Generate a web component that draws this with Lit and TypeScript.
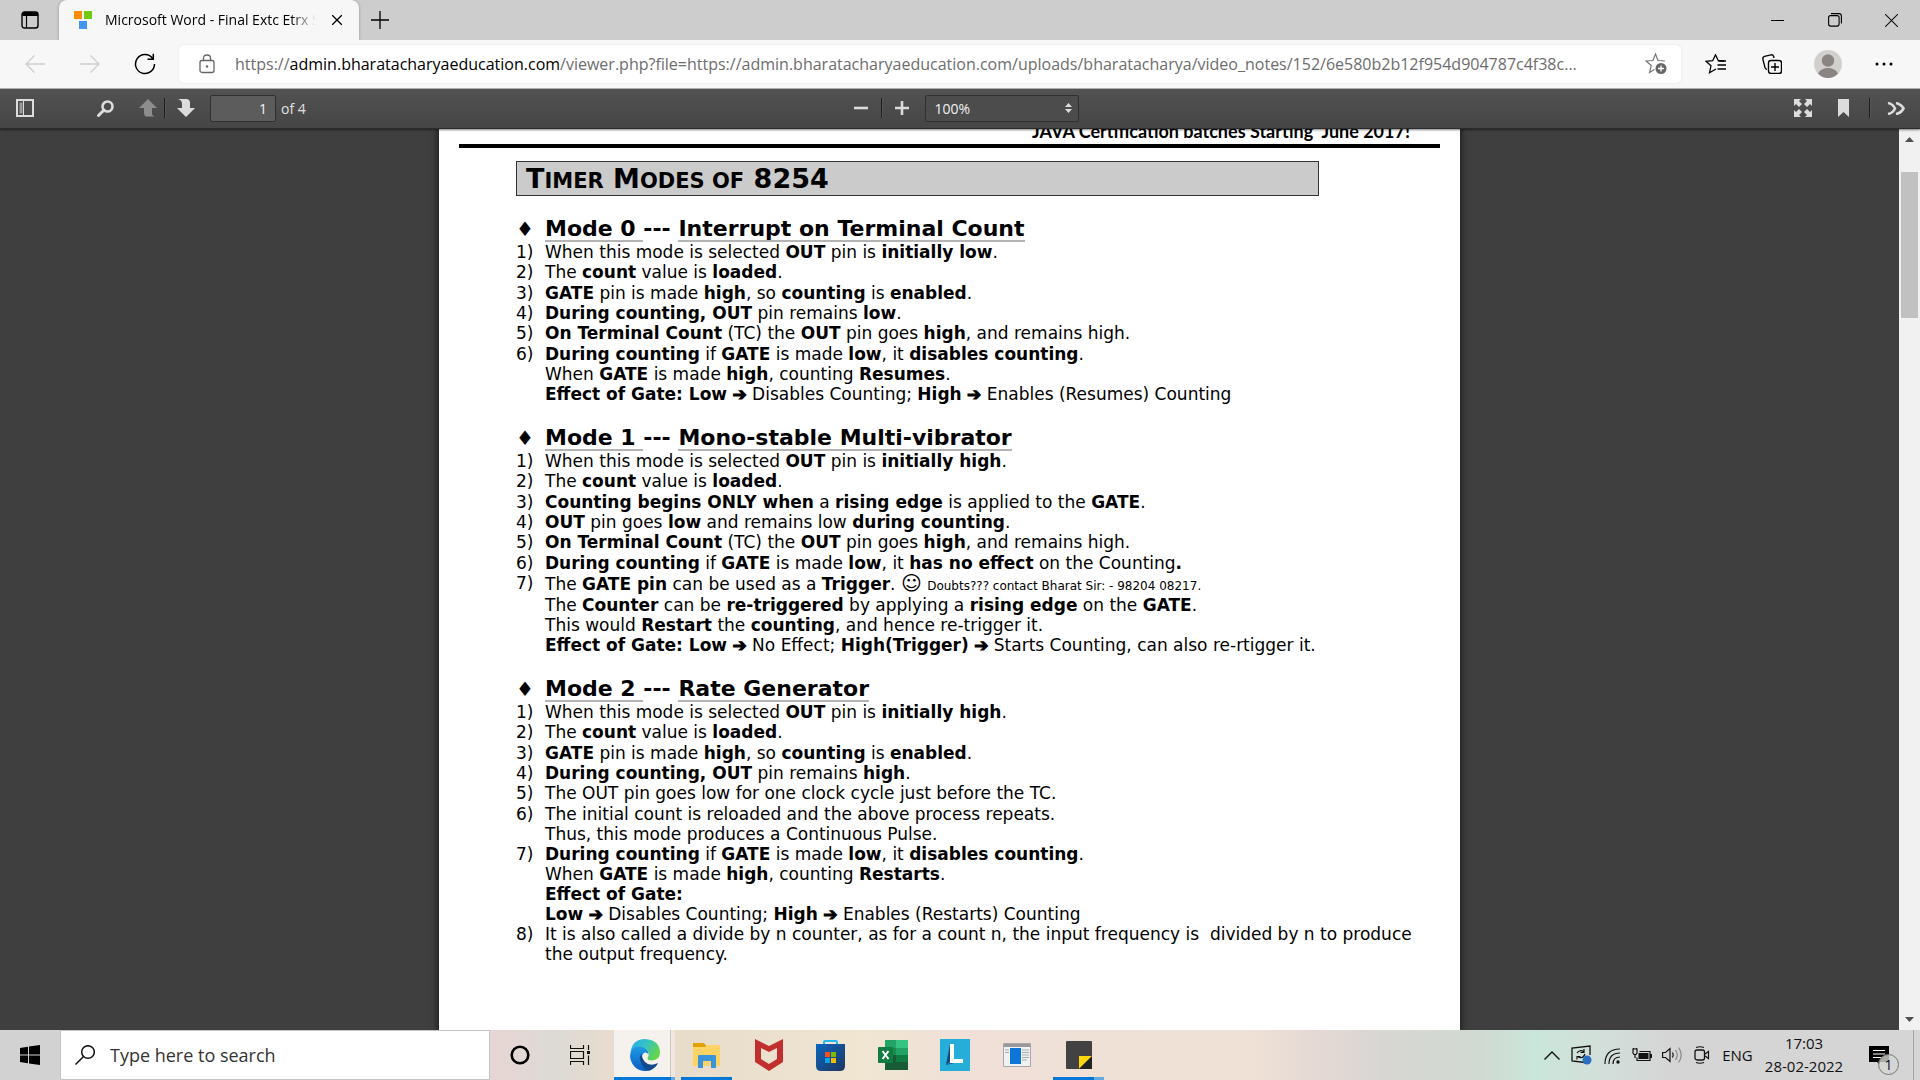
import { LitElement, html, css, svg, TemplateResult } from "lit";
import { customElement } from "lit/decorators.js";

const icon = (w: number, h: number, body: TemplateResult, cls = "") => html`
  <svg class=${cls} width=${w} height=${h} viewBox="0 0 ${w} ${h}" fill="none" aria-hidden="true">${body}</svg>`;

/* ---------- browser chrome ---------- */

@customElement("tab-strip")
class TabStrip extends LitElement {
  static styles = css`
    :host { display: flex; height: 40px; background: #cdcdcd; font-family: "Open Sans", sans-serif; }
    button { border: 0; padding: 0; background: none; display: grid; place-items: center; color: #000; }
    .actions { width: 59px; }
    .tab { display: flex; align-items: center; width: 300px; box-sizing: border-box; padding: 0 14px 0 15px; gap: 13px;
      background: #f7f7f7; border-radius: 8px 8px 0 0; box-shadow: 0 0 3px rgba(0,0,0,.3); clip-path: inset(0 -4px 0 -4px); }
    .title { flex: 1; overflow: hidden; white-space: nowrap; font-size: 14px; line-height: 20px;
      -webkit-mask-image: linear-gradient(90deg, #000 88%, transparent); mask-image: linear-gradient(90deg, #000 88%, transparent); }
    .close { width: 16px; }
    .new { width: 42px; }
    .space { flex: 1; }
    .win { width: 57px; }
  `;
  render() {
    return html`
      <button class="actions" aria-label="Tab actions">${icon(18, 18, svg`
        <rect x="1" y="1" width="16" height="16" rx="2.5" stroke="#000" stroke-width="1.4"/>
        <path d="M1 3.500Q1 1 3.500 1H14.500Q17 1 17 3.500V5H1Z" fill="#000"/><path d="M5.500 5V17" stroke="#000" stroke-width="1.200"/>`)}</button>
      <div class="tab">
        ${icon(18, 18, svg`<path d="M0 0h8v8H0z" fill="#ff8c00"/><path d="M10 0h8v8h-8z" fill="#6fcb0c"/><path d="M5 10h8v8H5z" fill="#4096f5"/>`)}
        <span class="title">Microsoft Word - Final Extc Etrx Sem</span>
        <button class="close" aria-label="Close tab">${icon(10, 10, svg`<path d="M0 0L10 10M10 0L0 10" stroke="#000" stroke-width="1.300"/>`)}</button>
      </div>
      <button class="new" aria-label="New tab">${icon(18, 18, svg`<path d="M9 0V18M0 9H18" stroke="#000" stroke-width="1.300"/>`)}</button>
      <span class="space"></span>
      <button class="win" aria-label="Minimize">${icon(13, 13, svg`<path d="M0 6.500H13" stroke="#000"/>`)}</button>
      <button class="win" aria-label="Restore">${icon(14, 14, svg`<rect x=".6" y="2.600" width="10.500" height="10.500" rx="2" stroke="#000" stroke-width="1.100"/><path d="M3 .6H11Q13.400 .6 13.400 3V10.500" stroke="#000" stroke-width="1.100"/>`)}</button>
      <button class="win" aria-label="Close">${icon(13, 13, svg`<path d="M0 0L13 13M13 0L0 13" stroke="#111" stroke-width="1.100"/>`)}</button>`;
  }
}

@customElement("address-bar")
class AddressBar extends LitElement {
  static styles = css`
    :host { display: flex; align-items: center; height: 48px; background: #f7f7f7; border-bottom: 1px solid #b5b5b5;
      font-family: "Open Sans", sans-serif; }
    button { border: 0; padding: 0; background: none; display: grid; place-items: center; flex: none; width: 55px; height: 40px; }
    .nav { display: flex; padding: 0 7px; }
    .box { flex: 1; min-width: 0; display: flex; align-items: center; height: 38px; background: #fff; border-radius: 5px;
      padding: 0 5px 0 20px; gap: 20px; box-shadow: 0 0 3px rgba(0,0,0,.08); }
    .url { flex: 1; min-width: 0; overflow: hidden; white-space: nowrap; text-overflow: ellipsis; font-size: 16px; line-height: 24px;
      color: #6d6d6d; text-decoration: none; }
    .url b { font-weight: 400; color: #000; }
    .box button { width: 40px; }
    .box svg { flex: none; }
    .side { display: flex; padding: 0 8px 0 7px; }
    .side button { width: 56px; }
  `;
  render() {
    return html`
      <nav class="nav">
        <button aria-label="Back">${icon(20, 18, svg`<path d="M20 9H1M9.500 .5L1 9L9.500 17.500" stroke="#cfcfcf" stroke-width="1.400"/>`)}</button>
        <button aria-label="Forward">${icon(20, 18, svg`<path d="M0 9H19M10.500 .5L19 9L10.500 17.500" stroke="#cfcfcf" stroke-width="1.400"/>`)}</button>
        <button aria-label="Refresh">${icon(22, 22, svg`<path d="M18.500 5.200A9.500 9.500 0 1 0 20.500 11M19.300 .8V6.300H13.500" stroke="#000" stroke-width="1.500"/>`)}</button>
      </nav>
      <div class="box">
        ${icon(16, 20, svg`<rect x="1" y="6.500" width="14" height="12" rx="2" stroke="#666" stroke-width="1.300"/><path d="M4.500 6.500V4Q4.500 1 8 1T11.500 4V6.500" stroke="#666" stroke-width="1.300"/><circle cx="8" cy="12.500" r="1.200" fill="#666"/>`)}
        <a class="url" href="#">https://<b>admin.bharatacharyaeducation.com</b>/viewer.php?file=https://admin.bharatacharyaeducation.com/uploads/bharatacharya/video_notes/152/6e580b2b12f954d904787c4f38c...</a>
        <button aria-label="Add to favorites">${icon(22, 22, svg`<path d="M20 8L13 7.500L10.500 1L8 7.500L1 8L6.300 12.500L4.500 19.500L9.500 16.500" stroke="#777" stroke-width="1.200"/><circle cx="16" cy="15.500" r="5.500" fill="#666"/><path d="M16 12.500V18.500M13 15.500H19" stroke="#fff" stroke-width="1.300"/>`)}</button>
      </div>
      <div class="side">
        <button aria-label="Favorites">${icon(22, 20, svg`<path d="M19 7L13.300 6.700L10.500 .8L7.700 6.700L1 7.300L6 11.800L4.500 18.700L11 15" stroke="#000" stroke-width="1.300"/><path d="M13.500 7H21M12.500 11H21M12.500 15H21" stroke="#000" stroke-width="1.300"/>`)}</button>
        <button aria-label="Collections">${icon(20, 20, svg`<path d="M5 15.500Q3.500 15 3 13.500L.8 5Q.5 3 2.500 2.300L9 .8Q11 .5 11.700 2.500L12 4" stroke="#000" stroke-width="1.300"/><rect x="6.500" y="6.500" width="13" height="13" rx="2.500" stroke="#000" stroke-width="1.400"/><path d="M13 9V17M9 13H17" stroke="#000" stroke-width="1.400"/>`)}</button>
        <button aria-label="Profile">${icon(28, 28, svg`<circle cx="14" cy="14" r="14" fill="#d2d0ce"/><circle cx="14" cy="10.500" r="6.200" fill="#8a8583"/><path d="M4 23.500Q7 18 14 18T24 23.500Q19.500 28 14 28T4 23.500Z" fill="#8a8583"/>`)}</button>
        <button aria-label="Settings and more">${icon(18, 4, svg`<circle cx="2" cy="2" r="1.500" fill="#000"/><circle cx="9" cy="2" r="1.500" fill="#000"/><circle cx="16" cy="2" r="1.500" fill="#000"/>`)}</button>
      </div>`;
  }
}

/* ---------- PDF viewer ---------- */

@customElement("pdf-toolbar")
class PdfToolbar extends LitElement {
  static styles = css`
    :host { display: grid; grid-template-columns: 1fr auto 1fr; align-items: center; height: 40px; box-sizing: border-box;
      padding-bottom: 1px; background: linear-gradient(#525252, #454545); border-bottom: 1px solid #2b2b2b; position: relative;
      box-shadow: 0 1px 2px rgba(0,0,0,.5); font-family: "Open Sans", sans-serif; font-size: 14px; color: #e0e0e0; }
    button { border: 0; padding: 0; background: none; display: grid; place-items: center; height: 32px; width: 39px; }
    .group { display: flex; align-items: center; }
    .group.left { padding-left: 5px; }
    .group.right { justify-content: flex-end; padding-right: 5px; }
    .find { margin-left: 42px; }
    .prev { width: 33px; margin-left: 6px; }
    .wide { width: 41px; }
    .sep { width: 1px; height: 20px; background: #1e1e1e; border-right: 1px solid #555; }
    input { width: 66px; height: 27px; box-sizing: border-box; margin: 0 5px; padding: 0 8px; text-align: right; font: inherit;
      color: #f2f2f2; background: #5c5c5c; border: 1px solid #303030; border-radius: 2px; }
    label { display: flex; align-items: center; }
    .zoom { position: relative; display: flex; align-items: center; margin-left: 3px; }
    select { appearance: none; width: 154px; height: 27px; padding: 0 9px; font: inherit; color: #f2f2f2; background: #4c4c4c;
      border: 1px solid #303030; border-radius: 2px; }
    .carets { position: absolute; right: 7px; pointer-events: none; }
    .sep.gap { margin: 0 5px; }
  `;
  render() {
    const up = svg`<path d="M9 0L18 9H13V14Q13 17 16 17.500H7Q5 17 5 13V9H0Z" fill="#8d8d8d"/>`;
    const down = svg`<path d="M9 18L18 9H13V4Q13 .5 10 0H1Q5 1 5 5V9H0Z" fill="#dcdcdc"/>`;
    return html`
      <div class="group left">
        <button aria-label="Toggle sidebar">${icon(18, 18, svg`<rect x="1" y="1" width="16" height="16" stroke="#dcdcdc" stroke-width="2"/><path d="M3.500 3.500H6.500V14.500H3.500Z" fill="#999"/><path d="M7.500 2V16" stroke="#dcdcdc"/>`)}</button>
        <button class="find" aria-label="Find">${icon(17, 17, svg`<circle cx="10.500" cy="6.500" r="5" stroke="#dcdcdc" stroke-width="2.600"/><path d="M7 10L1.500 15.500" stroke="#dcdcdc" stroke-width="3" stroke-linecap="round"/>`)}</button>
        <button class="prev" aria-label="Previous page">${icon(18, 18, up)}</button>
        <span class="sep"></span>
        <button aria-label="Next page">${icon(18, 18, down)}</button>
        <label><input aria-label="Page" value="1">of 4</label>
      </div>
      <div class="group">
        <button aria-label="Zoom out">${icon(14, 14, svg`<path d="M0 7H14" stroke="#dcdcdc" stroke-width="2.600"/>`)}</button>
        <span class="sep"></span>
        <button aria-label="Zoom in">${icon(14, 14, svg`<path d="M0 7H14M7 0V14" stroke="#dcdcdc" stroke-width="2.600"/>`)}</button>
        <div class="zoom">
          <select aria-label="Zoom"><option>100%</option></select>
          ${icon(7, 10, svg`<path d="M3.500 0L7 4H0ZM0 6H7L3.500 10Z" fill="#dcdcdc"/>`, "carets")}
        </div>
      </div>
      <div class="group right">
        <button class="wide" aria-label="Presentation mode">${icon(18, 18, svg`<path d="M0 0H7L5 2L8 5L5 8L2 5L0 7ZM18 0V7L16 5L13 8L10 5L13 2L11 0ZM0 18V11L2 13L5 10L8 13L5 16L7 18ZM18 18H11L13 16L10 13L13 10L16 13L18 11Z" fill="#dcdcdc"/>`)}</button>
        <button class="wide" aria-label="Bookmark">${icon(11, 18, svg`<path d="M0 0H11V18L5.500 13L0 18Z" fill="#dcdcdc"/>`)}</button>
        <span class="sep gap"></span>
        <button aria-label="Tools">${icon(18, 13, svg`<path d="M1 1Q6 2 8 6.500Q6 11 1 12M9 1Q14 2 16.500 6.500Q14 11 9 12" stroke="#dcdcdc" stroke-width="2.600"/>`)}</button>
      </div>`;
  }
}

type Line = TemplateResult | string;
interface Mode { name: string; title: string; items: Line[][]; }

const arrow = html`<b class="arrow">➔</b>`;

const modes: Mode[] = [
  {
    name: "Mode 0", title: "Interrupt on Terminal Count",
    items: [
      [html`When this mode is selected <b>OUT</b> pin is <b>initially low</b>.`],
      [html`The <b>count</b> value is <b>loaded</b>.`],
      [html`<b>GATE</b> pin is made <b>high</b>, so <b>counting</b> is <b>enabled</b>.`],
      [html`<b>During counting, OUT</b> pin remains <b>low</b>.`],
      [html`<b>On Terminal Count</b> (TC) the <b>OUT</b> pin goes <b>high</b>, and remains high.`],
      [
        html`<b>During counting</b> if <b>GATE</b> is made <b>low</b>, it <b>disables counting</b>.`,
        html`When <b>GATE</b> is made <b>high</b>, counting <b>Resumes</b>.`,
        html`<b>Effect of Gate: Low</b> ${arrow} Disables Counting; <b>High</b> ${arrow} Enables (Resumes) Counting`,
      ],
    ],
  },
  {
    name: "Mode 1", title: "Mono-stable Multi-vibrator",
    items: [
      [html`When this mode is selected <b>OUT</b> pin is <b>initially high</b>.`],
      [html`The <b>count</b> value is <b>loaded</b>.`],
      [html`<b>Counting begins ONLY when</b> a <b>rising edge</b> is applied to the <b>GATE</b>.`],
      [html`<b>OUT</b> pin goes <b>low</b> and remains low <b>during counting</b>.`],
      [html`<b>On Terminal Count</b> (TC) the <b>OUT</b> pin goes <b>high</b>, and remains high.`],
      [html`<b>During counting</b> if <b>GATE</b> is made <b>low</b>, it <b>has no effect</b> on the Counting<b>.</b>`],
      [
        html`<div class="tall">The <b>GATE pin</b> can be used as a <b>Trigger</b>. <span class="smile">☺</span> <small>Doubts??? contact Bharat Sir: - 98204 08217.</small></div>`,
        html`The <b>Counter</b> can be <b>re-triggered</b> by applying a <b>rising edge</b> on the <b>GATE</b>.`,
        html`This would <b>Restart</b> the <b>counting</b>, and hence re-trigger it.`,
        html`<b>Effect of Gate: Low</b> ${arrow} No Effect; <b>High(Trigger)</b> ${arrow} Starts Counting, can also re-rtigger it.`,
      ],
    ],
  },
  {
    name: "Mode 2", title: "Rate Generator",
    items: [
      [html`When this mode is selected <b>OUT</b> pin is <b>initially high</b>.`],
      [html`The <b>count</b> value is <b>loaded</b>.`],
      [html`<b>GATE</b> pin is made <b>high</b>, so <b>counting</b> is <b>enabled</b>.`],
      [html`<b>During counting, OUT</b> pin remains <b>high</b>.`],
      ["The OUT pin goes low for one clock cycle just before the TC."],
      ["The initial count is reloaded and the above process repeats.", "Thus, this mode produces a Continuous Pulse."],
      [
        html`<b>During counting</b> if <b>GATE</b> is made <b>low</b>, it <b>disables counting</b>.`,
        html`When <b>GATE</b> is made <b>high</b>, counting <b>Restarts</b>.`,
        html`<b>Effect of Gate:</b>`,
        html`<b>Low</b> ${arrow} Disables Counting; <b>High</b> ${arrow} Enables (Restarts) Counting`,
      ],
      ["It is also called a divide by n counter, as for a count n, the input frequency is  divided by n to produce", "the output frequency."],
    ],
  },
];

@customElement("pdf-page")
class PdfPage extends LitElement {
  static styles = css`
    :host { display: block; width: 1021px; box-sizing: border-box; padding: 0 20px; background: #fff; color: #000;
      font-family: "DejaVu Sans", sans-serif; font-size: 17px; line-height: 20px; box-shadow: 0 0 6px 2px rgba(0,0,0,.5); }
    header { margin-top: -11px; padding: 0 30px 0 0; text-align: right; white-space: pre; font: 700 18px/26px Lato, sans-serif;
      border-bottom: 4px solid #000; }
    .body { padding: 13px 0 60px 57px; }
    h1 { width: 803px; height: 35px; box-sizing: border-box; margin: 0 0 22px; padding: 0 9px; background: #cbcbcb; border: 1px solid #333;
      font-size: 27px; line-height: 34px; font-weight: 700; }
    h1 span { font-size: 21px; line-height: 1; }
    h2 { display: flex; height: 24px; margin: 0; font-size: 22px; line-height: 22px; white-space: pre; }
    h2::before { content: "♦"; width: 29px; font-size: 20px; }
    h2 span { border-bottom: 2px solid #b4b4b4; height: 22px; }
    ol { list-style: none; counter-reset: n; margin: 0 0 23px; padding: 0; }
    li { counter-increment: n; display: grid; grid-template-columns: 29px 1fr; white-space: pre; }
    li::before { content: counter(n) ")"; }
    li:nth-child(3n) { margin-top: 1px; }
    .line { min-height: 20px; }
    .tall { height: 22px; }
    .arrow { -webkit-text-stroke: 1px #000; }
    small { font-size: 12px; line-height: 1; }
    .smile { font-size: 20px; line-height: 1; }
  `;
  render() {
    return html`
      <header>JAVA Certification batches Starting  June 2017!</header>
      <div class="body">
        <h1>T<span>IMER</span> M<span>ODES OF</span> 8254</h1>
        ${modes.map((m) => html`
          <h2><span>${m.name} </span>--- <span>${m.title}</span></h2>
          <ol>${m.items.map((lines) => html`<li><div>${lines.map((l) => html`<div class="line">${l}</div>`)}</div></li>`)}</ol>`)}
      </div>`;
  }
}

@customElement("pdf-viewer")
class PdfViewer extends LitElement {
  static styles = css`
    :host { display: flex; min-height: 0; overflow: hidden; background: #3f3f3f; }
    .stage { flex: 1; display: flex; justify-content: center; overflow: hidden; }
    .scroll { width: 21px; display: flex; flex-direction: column; align-items: center; background: #f1f1f1; }
    .scroll button { border: 0; padding: 0; background: none; width: 21px; height: 21px; display: grid; place-items: center; }
    .track { flex: 1; display: flex; justify-content: center; padding-top: 22px; }
    .thumb { width: 17px; height: 146px; background: #c1c1c1; }
  `;
  render() {
    return html`
      <div class="stage"><pdf-page></pdf-page></div>
      <div class="scroll">
        <button aria-label="Scroll up">${icon(9, 5, svg`<path d="M0 5L4.500 0L9 5Z" fill="#505050"/>`)}</button>
        <div class="track"><div class="thumb"></div></div>
        <button aria-label="Scroll down">${icon(9, 5, svg`<path d="M0 0L4.500 5L9 0Z" fill="#505050"/>`)}</button>
      </div>`;
  }
}

/* ---------- taskbar ---------- */

const apps: { name: string; cls: string; art: TemplateResult }[] = [
  { name: "Microsoft Edge", cls: "active", art: icon(30, 32, svg`
      <defs><linearGradient id="e1" x1="0" y1="0" x2="1" y2=".5"><stop offset="0" stop-color="#2aa9ea"/><stop offset=".5" stop-color="#36c2c8"/><stop offset="1" stop-color="#62d64a"/></linearGradient>
      <linearGradient id="e2" x1="0" y1="0" x2="0" y2="1"><stop offset="0" stop-color="#1f9be6"/><stop offset="1" stop-color="#0a5cc0"/></linearGradient></defs>
      <path d="M.5 14Q2 0 15 0Q30 1 30 14Q29.500 21 22 21.500Q17 21.500 17.500 19Q20 15 17 11Q9 5 .5 14Z" fill="url(#e1)"/>
      <path d="M0 17Q1 7 9 7.500Q18 8 18.500 15Q14 11 12 17Q11 28 20 31.500Q8 34 2.500 25Q0 21 0 17Z" fill="url(#e2)"/>
      <path d="M12 15Q9 17 10 21Q13 31 20 31.500Q26 29 28 24Q20 28 15 23Q11.500 19 12 15Z" fill="#114a8b"/>`) },
  { name: "File Explorer", cls: "running", art: icon(28, 26, svg`
      <path d="M0 1H11L14 5H27V24H0Z" fill="#e0a008"/><path d="M0 5H12L14.500 3H27V24H0Z" fill="#fdd365"/><path d="M5 26V14Q5 13 6 13H22Q23 13 23 14V26H18V19H10V26Z" fill="#3b94da"/>`) },
  { name: "McAfee", cls: "", art: icon(28, 32, svg`
      <path d="M0 0L14 7L28 0V23L14 32L0 23ZM6 9V20L14 25L22 20V9L14 13Z" fill="#c12f2f" fill-rule="evenodd"/>`) },
  { name: "Microsoft Store", cls: "", art: icon(30, 32, svg`
      <defs><linearGradient id="s1" x1="0" y1="0" x2="1" y2="1"><stop offset="0" stop-color="#0a67bf"/><stop offset="1" stop-color="#1f3560"/></linearGradient></defs>
      <path d="M8 6V3Q8 2 9 2H20Q21 2 21 3V6" stroke="#22b8ee" stroke-width="2"/><path d="M0 5H29V27Q29 32 24 32H5Q0 32 0 27Z" fill="url(#s1)"/>
      <path d="M9 13h5v5H9z" fill="#f25022"/><path d="M15 13h5v5h-5z" fill="#7fba00"/><path d="M9 19h5v5H9z" fill="#00a4ef"/><path d="M15 19h5v5h-5z" fill="#ffb900"/>`) },
  { name: "Excel", cls: "", art: icon(30, 30, svg`
      <path d="M7 0H18V15H7Z" fill="#21a366"/><path d="M18 0H30V8H18Z" fill="#33c481"/><path d="M18 8H30V15H18Z" fill="#21a366"/><path d="M7 8H18V15H7Z" fill="#1a8a51"/><path d="M7 15H18V30H7Z" fill="#185c37"/><path d="M18 15H30V22H18Z" fill="#107c41"/><path d="M18 22H30V30H18Z" fill="#185c37"/><rect y="7" width="15" height="16" rx="1" fill="#107c41"/><path d="M4.500 11L10.500 19M10.500 11L4.500 19" stroke="#fff" stroke-width="2"/>`) },
  { name: "Lenovo Vantage", cls: "", art: icon(30, 32, svg`
      <path d="M0 0H30V32H0Z" fill="#26add9"/><path d="M10 5L6 26L10 23Z" fill="#134a7c"/><path d="M10 5H14V20H23V24H10Z" fill="#fff"/><path d="M6 26L10 24L14 24Z" fill="#134a7c"/>`) },
  { name: "News app", cls: "", art: icon(28, 24, svg`
      <path d="M.5 .5H27.500V23.500H.5Z" fill="#eef2f5" stroke="#a8a8a8"/><path d="M1 1H27V4H1Z" fill="#999"/><path d="M7 5H18V21H7Z" fill="#0d74d8"/><path d="M2 7H6M2 9.500H6M19 7H26M19 9.500H26M19 12H26M19 14.500H26M19 17H24" stroke="#aaa"/>`) },
  { name: "Sticky Notes", cls: "running part", art: icon(26, 28, svg`
      <path d="M0 1Q0 0 1 0H25Q26 0 26 1V15L14 28H1Q0 28 0 27Z" fill="#424242"/><path d="M13 15H26L13 28Z" fill="#ffd60a"/><path d="M26 15V28H13Z" fill="#222"/>`) },
];

@customElement("task-bar")
class TaskBar extends LitElement {
  static styles = css`
    :host { display: flex; height: 50px; font-family: "Open Sans", sans-serif; color: #111;
      background: linear-gradient(90deg, #d2d2d2 0, #d8d4d4 20%, #e6d6d4 26%, #dddad5 29%, #e8dccd 32%, #e8dccb 36%, #f0e6d2 45%, #f0e0d8 50%, #efe1d5 65%, #e3d8d4 69%, #d8d6d3 72%, #d0d9d2 77%, #cae6da 80%, #d2e0da 83%, #d5d5d5 87%, #d5d5d5 100%); }
    button { border: 0; padding: 0; background: none; display: grid; place-items: center; font: inherit; color: inherit; }
    .start { width: 60px; }
    .search { display: flex; align-items: center; gap: 15px; width: 430px; box-sizing: border-box; padding-left: 14px; background: #fff; border: 1px solid #c4c4c4; }
    .search input { flex: 1; min-width: 0; border: 0; padding: 0; background: none; font: 18px/24px "Open Sans", sans-serif; color: #222; }
    .search input::placeholder { color: #333; opacity: 1; }
    .sys { width: 60px; }
    .apps { display: flex; margin-left: 4px; }
    .apps button { width: 62px; height: 50px; position: relative; }
    .apps .active { background: linear-gradient(90deg, #f5f1ed 56px, #cfc8c0 56px, #cfc8c0 57px, #eee6df 57px, #eee6df 61px, transparent 61px); }
    .running::after, .active::after { content: ""; position: absolute; bottom: 0; left: 5px; width: 51px; height: 3px; background: #0078d7; }
    .active::after { left: 0; width: 61px; background: linear-gradient(90deg, #0078d7 57px, #62aae6 57px); }
    .part::after { background: linear-gradient(90deg, #0078d7 41px, #62aae6 41px); }
    .space { flex: 1; }
    .tray { display: flex; align-items: center; }
    .tray button { height: 50px; width: 30px; }
    .tray .lang { width: 41px; font-size: 15px; }
    .tray .clock { width: 92px; font-size: 15px; line-height: 23px; place-content: center; }
    .tray .note { width: 50px; padding-left: 8px; position: relative; }
    .badge { position: absolute; right: 1px; top: 24px; width: 19px; height: 19px; border: 1px solid #777; border-radius: 50%;
      background: rgba(213,213,213,.8); font-size: 14px; line-height: 19px; text-align: center; }
    .peek { width: 6px; margin-left: 13px; border-left: 1px solid #a5a5a5; height: 50px; }
  `;
  render() {
    const k = "#111";
    return html`
      <button class="start" aria-label="Start">${icon(20, 20, svg`<path d="M0 3L8 1.800V9.500H0ZM9 1.600L20 0V9.500H9ZM0 10.500H8V18.200L0 17ZM9 10.500H20V20L9 18.400Z" fill="#000"/>`)}</button>
      <label class="search">${icon(20, 20, svg`<circle cx="13" cy="7" r="6.300" stroke="#111" stroke-width="1.500"/><path d="M8.500 11.500L.5 19.500" stroke="#111" stroke-width="1.500"/>`)}
        <input placeholder="Type here to search" aria-label="Search"></label>
      <button class="sys" aria-label="Cortana">${icon(20, 20, svg`<circle cx="10" cy="10" r="8.300" stroke="#000" stroke-width="2.600"/>`)}</button>
      <button class="sys" aria-label="Task view">${icon(20, 20, svg`<path d="M.5 0V3.500H13.500V0M.5 6.500H13.500V13.500H.5ZM.5 20V16.500H13.500V20M18.500 0V5M18.500 10.500V20" stroke="#111" stroke-width="1.200"/><path d="M17 6H20V9H17Z" fill="#111"/>`)}</button>
      <div class="apps">${apps.map((a) => html`<button class=${a.cls} aria-label=${a.name}>${a.art}</button>`)}</div>
      <span class="space"></span>
      <div class="tray">
        <button aria-label="Show hidden icons">${icon(16, 9, svg`<path d="M.5 8.500L8 1L15.500 8.500" stroke=${k} stroke-width="1.400"/>`)}</button>
        <button aria-label="Update">${icon(22, 20, svg`<path d="M14 17.500L1 16V3L19 1V10" stroke=${k} stroke-width="1.300"/><path d="M6 8Q9 4 13 7M13 4V7.500H9.500M14 9Q12 14 7 12M6 14.500V11.500H9.500" stroke=${k} stroke-width="1.200"/><circle cx="16" cy="15" r="4.500" fill="#2a6fc0"/>`)}</button>
        <button aria-label="Network">${icon(17, 17, svg`<path d="M1 17Q1 2 16 2M5 17Q5 6 16 6M9 17Q9 10 16 10" stroke=${k} stroke-width="1.200"/><circle cx="14" cy="15" r="1.700" fill=${k}/>`)}</button>
        <button aria-label="Battery">${icon(20, 14, svg`<path d="M7.500 3.500H18V12.500H5V9.500" stroke=${k} stroke-width="1.200"/><path d="M1 1H5V5L4 6.500H2L1 5ZM1.500 0V1M4.500 0V1M3 6V10" stroke=${k} stroke-width="1.200"/><path d="M6.500 5H16.500V11H6.500Z" fill=${k}/><path d="M19 6V10" stroke=${k} stroke-width="2"/>`)}</button>
        <button aria-label="Volume">${icon(21, 18, svg`<path d="M.6 6.500H3.500L8 2.500V15.500L3.500 11.500H.6Z" stroke=${k} stroke-width="1.200"/><path d="M10.500 6.500Q12 9 10.500 11.500" stroke=${k} stroke-width="1.200"/><path d="M13.500 4Q17 9 13.500 14M16.500 1.500Q22 9 16.500 16.500" stroke="#888" stroke-width="1.200"/>`)}</button>
        <button aria-label="Meet now">${icon(16, 18, svg`<rect x="1" y="4" width="9.500" height="10" rx="2" stroke=${k} stroke-width="1.300"/><path d="M11 8L14.500 5.500V12.500L11 10M2 1.500Q6 0 10 1.500M2 16.500Q6 18 10 16.500" stroke=${k} stroke-width="1.200"/>`)}</button>
        <button class="lang">ENG</button>
        <button class="clock"><span>17:03</span><span>28-02-2022</span></button>
        <button class="note" aria-label="Notifications">${icon(20, 19, svg`<path d="M0 0H20V16H11V19L8 16H0Z" fill="#000"/><path d="M4 4.500H16M4 8H16M4 11.500H12" stroke="#fff"/>`)}<span class="badge">1</span></button>
        <span class="peek"></span>
      </div>`;
  }
}

@customElement("app-root")
class AppRoot extends LitElement {
  static styles = css`
    :host { display: grid; grid-template-columns: minmax(0, 1fr); grid-template-rows: auto auto auto minmax(0, 1fr) auto;
      height: 100vh; overflow: hidden; }
  `;
  render() {
    return html`<tab-strip></tab-strip><address-bar></address-bar><pdf-toolbar></pdf-toolbar><pdf-viewer></pdf-viewer><task-bar></task-bar>`;
  }
}
